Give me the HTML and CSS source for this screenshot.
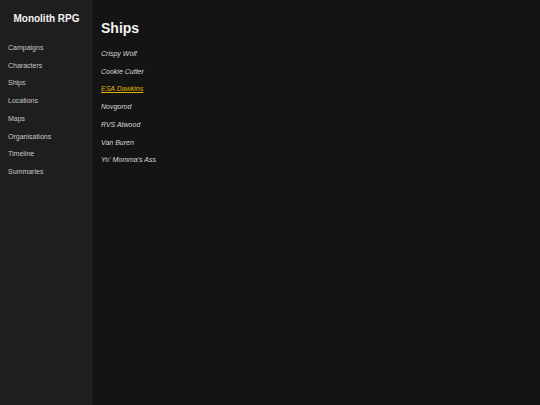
FILE: index.html
```html
<!DOCTYPE html>
<html>
<head>
<meta charset="utf-8">
<link rel="stylesheet" href="styles.css">
</head>
<body>
<div class="app">
  <aside class="sidebar">
    <div class="brand">Monolith RPG</div>
    <ul class="nav">
      <li>Campaigns</li>
      <li>Characters</li>
      <li>Ships</li>
      <li>Locations</li>
      <li>Maps</li>
      <li>Organisations</li>
      <li>Timeline</li>
      <li>Summaries</li>
    </ul>
  </aside>
  <main class="content">
    <h1 class="title">Ships</h1>
    <ul class="list">
      <li>Crispy Wolf</li>
      <li>Cookie Cutter</li>
      <li><a class="active" href="#">ESA Dawkins</a></li>
      <li>Novgorod</li>
      <li>RVS Atwood</li>
      <li>Van Buren</li>
      <li>Yo' Momma's Ass</li>
    </ul>
  </main>
</div>
</body>
</html>
```
FILE: styles.css
```css
html, body {
  margin: 0;
  padding: 0;
  height: 100%;
  background: #141414;
  font-family: "Liberation Sans", Arial, sans-serif;
}
.app {
  display: flex;
  height: 100%;
}
.sidebar {
  width: 94px;
  flex: none;
  background: #1e1e1e;
  border-right: 1px solid #101010;
  padding-top: 12px;
  box-sizing: border-box;
}
.brand {
  color: #f2f2f2;
  font-weight: bold;
  font-size: 10px;
  line-height: 14px;
  text-align: center;
}
.nav {
  list-style: none;
  margin: 13px 0 0;
  padding: 0 0 0 8px;
}
.nav li {
  color: #c8c8c8;
  font-size: 7px;
  line-height: 17.7px;
}
.content {
  flex: 1;
  padding: 20px 0 0 7px;
}
.title {
  margin: 0;
  color: #f2f2f2;
  font-size: 14px;
  line-height: 16px;
  font-weight: bold;
}
.list {
  list-style: none;
  margin: 9px 0 0;
  padding: 0;
}
.list li {
  color: #d8d8d8;
  font-size: 7px;
  font-style: italic;
  line-height: 17.7px;
}
.list a.active {
  color: #e0b400;
  text-decoration: underline;
}
```
